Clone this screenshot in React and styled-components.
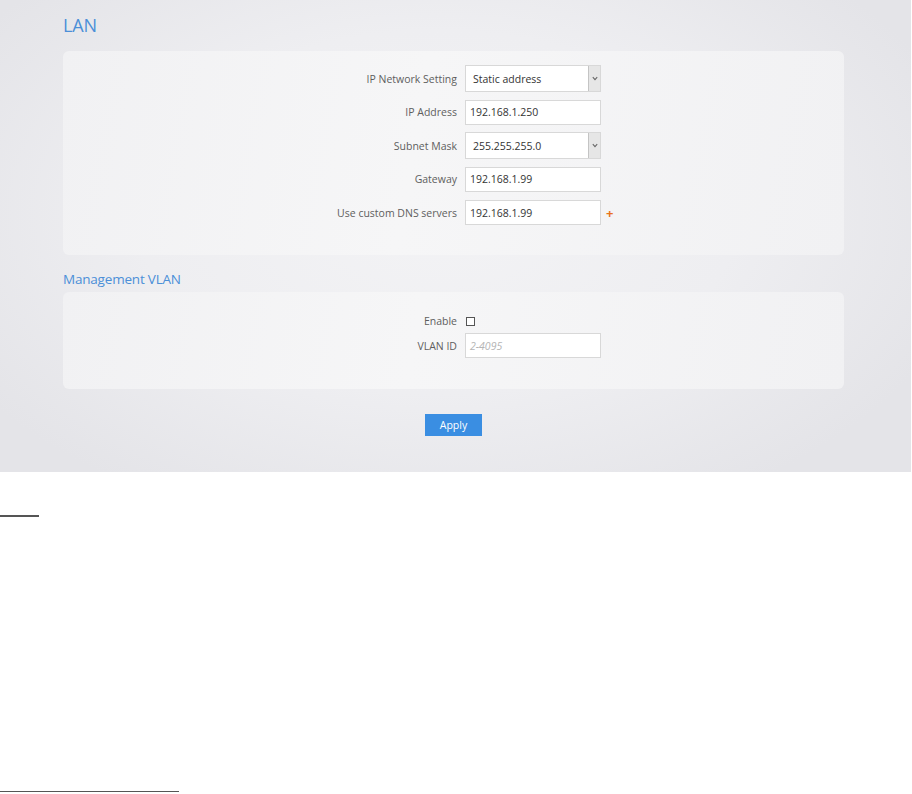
import { createGlobalStyle, styled } from "styled-components";

const Global = createGlobalStyle`
  html, body { margin: 0; padding: 0; background: #fff; }
  body { font-family: "Open Sans", "Liberation Sans", sans-serif; }
  * { box-sizing: border-box; }
`;

const Shot = styled.div`
  width: 911px;
  height: 472px;
  padding: 13px 0 0 63px;
  background:
    radial-gradient(ellipse 60% 70% at 48% 45%, #f3f3f5 0%, #eeeef1 55%, #e4e4e8 100%);
`;

const Heading = styled.h1`
  margin: 0;
  margin-top: ${(p) => p.top || 0}px;
  font-size: ${(p) => p.size}px;
  font-weight: 400;
  color: #4b8fd8;
  line-height: ${(p) => p.lh}px;
  letter-spacing: -0.2px;
`;

const Panel = styled.div`
  width: 781px;
  margin-top: ${(p) => p.top}px;
  padding: ${(p) => p.pad};
  border-radius: 6px;
  background: linear-gradient(100deg, #f1f1f3 0%, #f6f6f7 45%, #f1f1f3 100%);
  display: grid;
  grid-template-columns: 394px 136px;
  grid-template-rows: ${(p) => p.rows};
  column-gap: 8px;
  row-gap: ${(p) => p.gap}px;
  align-items: center;
`;

const Label = styled.div`
  text-align: right;
  font-size: 10.5px;
  color: #5e5e5e;
`;

const Field = styled.div`
  position: relative;
  height: ${(p) => (p.tall ? 27 : 25)}px;
  display: flex;
  align-items: center;
  background: #fff;
  border: 1px solid #d8d8d8;
  padding-left: ${(p) => (p.select ? 7 : 4)}px;
  font-size: 10.5px;
  color: #333;
`;

const Placeholder = styled.span`
  color: #b5b5b5;
  font-style: italic;
`;

const ArrowBox = styled.div`
  margin-left: auto;
  width: 12px;
  height: 100%;
  background: #e6e6e6;
  border-left: 1px solid #c4c4c4;
  display: flex;
  align-items: center;
  justify-content: center;
`;

const Plus = styled.span`
  position: absolute;
  left: 140px;
  top: 3px;
  color: #e8721d;
  font-size: 13px;
  font-weight: 700;
`;

const Check = styled.div`
  width: 9px;
  height: 9px;
  border: 1px solid #555;
  background: #fff;
  margin-left: 1px;
`;

const Row = styled.div`
  display: flex;
  justify-content: center;
  width: 781px;
  margin-top: 25px;
`;

const Button = styled.button`
  width: 57px;
  height: 22px;
  border: none;
  background: #3a8ee2;
  color: #fff;
  font-family: inherit;
  font-size: 10.5px;
  padding: 0;
`;

const Rule = styled.div`
  width: ${(p) => p.w}px;
  height: ${(p) => p.h}px;
  background: #555;
  margin-top: ${(p) => p.top}px;
`;

const Chevron = () => (
  <svg width="6" height="5" viewBox="0 0 6 5">
    <path d="M0.8 1.2 L3 3.6 L5.2 1.2" fill="none" stroke="#666" strokeWidth="1.1" />
  </svg>
);

const Select = ({ value }) => (
  <Field tall select>
    {value}
    <ArrowBox>
      <Chevron />
    </ArrowBox>
  </Field>
);

export default function App() {
  return (
    <>
      <Global />
      <Shot>
        <Heading size={18} lh={25}>LAN</Heading>
        <Panel top={13} pad="14px 0 29px 0" rows="repeat(5, 27px)" gap={6.5}>
          <Label>IP Network Setting</Label>
          <Select value="Static address" />
          <Label>IP Address</Label>
          <Field>192.168.1.250</Field>
          <Label>Subnet Mask</Label>
          <Select value="255.255.255.0" />
          <Label>Gateway</Label>
          <Field>192.168.1.99</Field>
          <Label>Use custom DNS servers</Label>
          <Field>
            192.168.1.99
            <Plus>+</Plus>
          </Field>
        </Panel>
        <Heading size={13.5} lh={20} top={14}>Management VLAN</Heading>
        <Panel top={3} pad="21px 0 31px 0" rows="16px 25px" gap={4}>
          <Label>Enable</Label>
          <Check />
          <Label>VLAN ID</Label>
          <Field>
            <Placeholder>2-4095</Placeholder>
          </Field>
        </Panel>
        <Row>
          <Button>Apply</Button>
        </Row>
      </Shot>
      <Rule w={39} h={2} top={43} />
      <Rule w={179} h={1} top={274} />
    </>
  );
}
